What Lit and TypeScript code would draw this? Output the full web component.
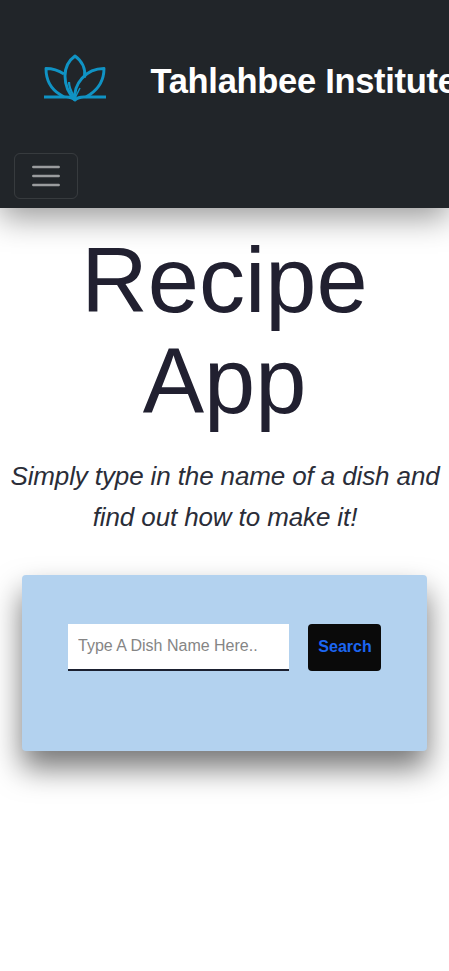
import { LitElement, html, css } from "lit";
import { customElement } from "lit/decorators.js";

@customElement("app-root")
export class AppRoot extends LitElement {
  static styles = css`
    :host {
      display: block;
      height: 971px;
      overflow: hidden;
      background: #fff;
      font-family: "Liberation Sans", Arial, sans-serif;
      color: #212529;
    }
    * { box-sizing: border-box; }
    .navbar {
      height: 208px;
      background: #212529;
      box-shadow: 0 10px 30px rgba(0, 0, 0, 0.4);
      overflow: visible;
    }
    .brand {
      display: flex;
      align-items: center;
      height: 153px;
      padding: 10px 0 0 42px;
      white-space: nowrap;
      color: #fff;
      font-size: 34.5px;
      font-weight: 700;
      letter-spacing: -0.3px;
    }
    .logo { flex: none; width: 66px; height: 50px; margin: -10px 42.5px 0 0; }
    .toggler {
      display: flex;
      align-items: center;
      justify-content: center;
      width: 64px;
      height: 46px;
      margin-left: 14px;
      padding: 0;
      background: none;
      border: 1px solid rgba(255, 255, 255, 0.1);
      border-radius: 6px;
    }
    .toggler svg { width: 36px; height: 36px; }
    h1 {
      width: 300px;
      margin: 22px auto 0;
      text-align: center;
      font-size: 92px;
      line-height: 101px;
      font-weight: 400;
      color: #212030;
    }
    .lead {
      margin: 24px 0 0;
      padding-left: 1px;
      text-align: center;
      font-size: 26px;
      line-height: 41px;
      letter-spacing: -0.12px;
      font-style: italic;
      color: #2a2d38;
      white-space: nowrap;
    }
    .card {
      display: flex;
      align-items: flex-start;
      gap: 19px;
      height: 176px;
      margin: 37px 22px 0;
      padding: 49px 46px 0;
      background: #b3d2ef;
      border-radius: 4px;
      box-shadow: 0 17px 30px rgba(0, 0, 0, 0.54);
    }
    input {
      width: 221px;
      height: 47px;
      padding: 0 10px 2px;
      border: 0;
      border-bottom: 2px solid #1b2030;
      border-radius: 0;
      background: #fff;
      font: 16px "Liberation Sans", Arial, sans-serif;
      outline: none;
    }
    input::placeholder { color: #858585; opacity: 1; }
    .search {
      width: 73px;
      height: 47px;
      padding: 0 0 2px 1px;
      border: 0;
      border-radius: 4px;
      background: #0a0a0a;
      color: #1c66f2;
      font: 700 16px "Liberation Sans", Arial, sans-serif;
    }
  `;

  render() {
    return html`
      <header class="navbar">
        <div class="brand">
          <svg class="logo" viewBox="0 0 66 50" fill="none" stroke="#1093c4" stroke-width="2.9" stroke-linejoin="round">
            <path d="M42.5 25.5C44 17 40 9 33 4C26 9 23 16 23 24C23 34 27 42 33 48" />
            <path d="M22 22C16 18 11 16.5 4 16.5C4 28 9 37 18 42.5L22 45" />
            <path d="M33 48C31 32 44 16.5 62 16.5C62 28 56 37 48 42.5L44 45" />
            <path d="M27 30C27 37 30 41 33 46" stroke-width="2.2" />
            <path d="M2 45H24C28 45 31 46 33 48C35 46 38 45 42 45H64" />
            <path d="M33 46L38 36" stroke-width="1.6" />
          </svg>
          <span>Tahlahbee Institute</span>
        </div>
        <button class="toggler" aria-label="Toggle navigation">
          <svg viewBox="0 0 30 30" fill="none" stroke="rgba(255,255,255,.55)" stroke-width="2" stroke-linecap="round">
            <path d="M4.4 7.5H25.6M4.4 15H25.6M4.4 22.5H25.6" />
          </svg>
        </button>
      </header>
      <main>
        <h1>Recipe App</h1>
        <p class="lead">Simply type in the name of a dish and<br />find out how to make it!</p>
        <section class="card">
          <input type="text" placeholder="Type A Dish Name Here.." />
          <button class="search">Search</button>
        </section>
      </main>
    `;
  }
}
